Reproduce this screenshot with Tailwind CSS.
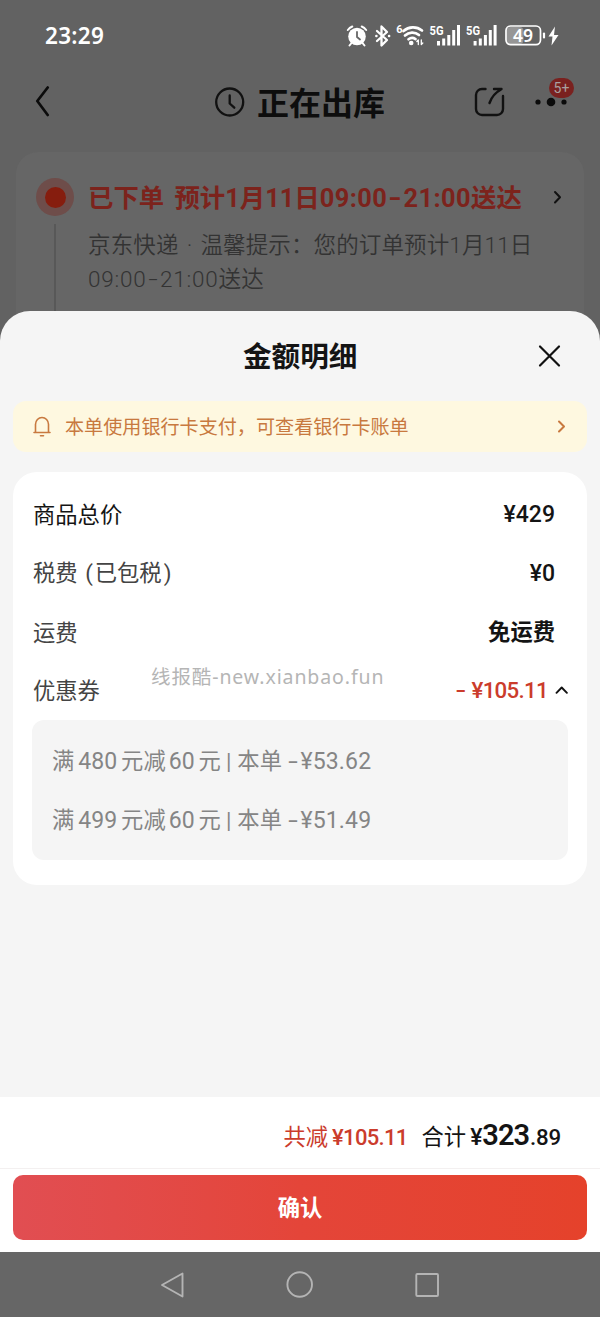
<!DOCTYPE html>
<html lang="zh-CN">
<head>
<meta charset="utf-8">
<meta name="viewport" content="width=device-width, initial-scale=1">
<title>金额明细</title>
<script src="https://cdn.jsdelivr.net/npm/@tailwindcss/browser@4"></script>
</head>
<body class="bg-[#626262]">
<div class="w-[600px] h-[1317px] flex flex-col overflow-hidden font-['Roboto','Noto_Sans_CJK_SC',sans-serif] text-[22.3px] leading-none whitespace-nowrap">

  <!-- Status bar -->
  <div class="h-[72px] shrink-0 flex items-center justify-between pl-[45px] pr-[40px] text-white">
    <span class="font-['Noto_Sans','Noto_Sans_CJK_SC',sans-serif] font-semibold text-[22.5px] tracking-[0.3px]">23:29</span>
    <svg class="w-[215px] h-[26px]" viewBox="345 23 215 26" fill="none" stroke="#fff" stroke-linecap="round" stroke-linejoin="round">
      <circle cx="357" cy="36.500" r="8.800" fill="#fff" stroke="none"/>
      <path d="M347.800 30a12 12 0 0 1 4.500-3.500M361.700 26.500a12 12 0 0 1 4.500 3.500M351.500 43l-2 2.500M362.500 43l2 2.500" stroke-width="2"/>
      <path d="M357 32v5l3 2.500" stroke="#666" stroke-width="1.800"/>
      <path d="M377 31l10 9-5.500 5.500v-19L387 32l-10 9" stroke-width="2.300"/>
      <path d="M376.300 36h.2M389 36h.2" stroke-width="2.400"/>
      <text x="396.300" y="33" font-family="Roboto" font-weight="700" font-size="11" fill="#fff" stroke="none">6</text>
      <path d="M403.500 31a14.500 14.500 0 0 1 18.500-.5M405 35.500a10.500 10.500 0 0 1 14-.5M408.500 39.300a6 6 0 0 1 7-.2" stroke-width="2.700"/>
      <circle cx="411.200" cy="43" r="2.300" fill="#fff" stroke="none"/>
      <path d="M418.300 44.500v-4.500l-1.500 1.500M421.300 40v4.500l1.500-1.500" stroke-width="1.300"/>
      <text x="429.500" y="35" font-family="Roboto" font-weight="700" font-size="13.500" textLength="14" lengthAdjust="spacingAndGlyphs" fill="#fff" stroke="none">5G</text>
      <path d="M437 45.500v-4.500h3v4.500zM442.200 45.500v-7h3v7zM447.300 45.500v-10.500h3v10.500zM452.200 45.500v-15.500h3v15.500zM457 45.500v-20.500h3v20.500z" fill="#fff" stroke="none"/>
      <text x="466" y="35" font-family="Roboto" font-weight="700" font-size="13.500" textLength="14" lengthAdjust="spacingAndGlyphs" fill="#fff" stroke="none">5G</text>
      <path d="M473.600 45.500v-4.500h3v4.500zM478.800 45.500v-7h3v7zM483.900 45.500v-10.500h3v10.500zM488.800 45.500v-15.500h3v15.500zM493.600 45.500v-20.500h3v20.500z" fill="#fff" stroke="none"/>
      <rect x="506.500" y="27" width="17" height="17" rx="4" fill="#969696" stroke="none"/>
      <rect x="506" y="26" width="34.500" height="18.600" rx="4.500" stroke-width="1.700"/>
      <text x="523" y="42" text-anchor="middle" font-family="Noto Sans" font-weight="600" font-size="17.500" fill="#fff" stroke="none">49</text>
      <path d="M544 33.500v4" stroke-width="2.200"/>
      <path d="M555 26.500l-6.500 10h4l-1 9 7-10.500h-4.500z" fill="#fff" stroke="none"/>
    </svg>
  </div>

  <!-- Page header -->
  <div class="h-[60px] shrink-0 flex items-center text-[#0d0d0d]">
    <svg class="w-4 h-8 ml-[34px]" viewBox="34 86 16 32" fill="none" stroke="#0b0b0b" stroke-width="2.700" stroke-linecap="round" stroke-linejoin="round"><path d="M47.700 87.500L37.300 101l10.400 14"/></svg>
    <svg class="w-8 h-8 ml-[164px]" viewBox="0 0 32 32" fill="none" stroke="#111" stroke-width="2.300" stroke-linecap="round" stroke-linejoin="round"><circle cx="15.700" cy="16" r="13.500"/><path d="M15.700 9.500v8l4.600 4.200"/></svg>
    <span class="ml-[11px] w-[129px] pt-[3px] text-[32px] font-bold">正在出库</span>
    <svg class="w-8 h-8 ml-[88px]" viewBox="474 86 32 32" fill="none" stroke="#111" stroke-width="2.400" stroke-linecap="round" stroke-linejoin="round"><path d="M485.500 89h-3.500a6 6 0 0 0-6 6v14a6 6 0 0 0 6 6h15a6 6 0 0 0 6-6V96M494 89h7.500M501 89.500c-5.500 3-9.500 7.500-11.500 13.500"/></svg>
    <div class="relative w-[40px] h-8 ml-[28px]">
      <svg class="w-full h-full" viewBox="534 86 40 32" fill="#0b0b0b"><circle cx="538" cy="102" r="2.600"/><circle cx="551" cy="102" r="4.300"/><circle cx="564" cy="102" r="2.600"/></svg>
      <span class="absolute left-[15px] -top-[8px] w-[25px] h-[20px] rounded-full bg-[#7a211f] text-[#a9a0a0] text-[14px] flex items-center justify-center">5+</span>
    </div>
  </div>

  <!-- Logistics card -->
  <div class="h-[220px] shrink-0 mt-5 mx-4 rounded-t-[22px] bg-[#666] flex">
    <div class="w-[38px] ml-5 flex flex-col items-center pt-[26px]">
      <div class="w-[38px] h-[38px] shrink-0 rounded-full bg-[#6e4d4a] flex items-center justify-center"><div class="w-[21px] h-[21px] rounded-full bg-[#861d0e]"></div></div>
      <div class="w-[1.500px] flex-1 mt-2 bg-[#585858]"></div>
    </div>
    <div class="ml-[14px] flex-1 pt-[26px]">
      <div class="h-[38px] flex items-center text-[25.400px] font-bold text-[#7c231c]"><span class="w-[436px] pt-[3px] [word-spacing:4px]">已下单 预计1月11日<span class="tracking-[0.4px]">09:00<span class="inline-block scale-x-140 mx-[3px]">-</span>21:00</span>送达</span>
        <svg class="w-3 h-4 ml-[27px]" viewBox="0 0 12 16" fill="none" stroke="#111" stroke-width="2" stroke-linecap="round" stroke-linejoin="round"><path d="M4 3l5 5.300L4 13.500"/></svg>
      </div>
      <div class="mt-[12px] h-[34px] flex items-center text-[22.500px] font-[350] text-[#333] [word-spacing:2.500px] tracking-[0.130px]">京东快递 · 温馨提示：您的订单预计1月11日</div>
      <div class="h-[34px] flex items-center text-[22.500px] font-[350] text-[#333] tracking-[0.2px]"><span><span class="tracking-[0.8px]">09:00<span class="inline-block scale-x-150 mx-[3px]">-</span>21:00</span>送达</span></div>
    </div>
  </div>

  <!-- Amount detail sheet -->
  <div class="relative h-[941px] shrink-0 -mt-[61px] rounded-t-[30px] bg-[#f5f5f5] flex flex-col text-[#141414]">
    <div class="h-[90px] flex items-center">
      <span class="ml-[243px] w-[115px] pt-[2px] text-[28.600px] font-bold">金额明细</span>
      <svg class="w-6 h-6 ml-[179px]" viewBox="0 0 24 24" fill="none" stroke="#111" stroke-width="2.200" stroke-linecap="round"><path d="M3 2.500l19 19M22 2.500l-19 19"/></svg>
    </div>

    <div class="h-[51px] mx-[13px] rounded-[13px] bg-[#fef8e0] text-[#c8793f] flex items-center">
      <svg class="w-5 h-6 ml-[19px]" viewBox="0 0 20 24" fill="none" stroke="#c8793f" stroke-width="1.600" stroke-linecap="round" stroke-linejoin="round"><path d="M2 17.500h16M3.500 17.200V9.300a6.500 6.800 0 0 1 13 0v7.900M8.500 20.700h3"/></svg>
      <span class="ml-[13px] w-[344px] pt-[2px] text-[19.100px]">本单使用银行卡支付，可查看银行卡账单</span>
      <svg class="w-3 h-4 ml-[146px]" viewBox="0 0 12 16" fill="none" stroke="#c8793f" stroke-width="2" stroke-linecap="round" stroke-linejoin="round"><path d="M4 2.500l5 5L4 12.500"/></svg>
    </div>

    <div class="relative mt-5 mx-[13px] h-[413px] rounded-[24px] bg-white pt-[13px] px-5">
      <div class="h-[58.750px] flex items-center justify-between pr-[12px]"><span class="pt-[2px]">商品总价</span><span class="font-medium text-[23px]">¥429</span></div>
      <div class="h-[58.750px] flex items-center justify-between pr-[12px]"><span class="pt-[1px] text-[#444]">税费 <span class="mx-[2px]">(</span>已包税<span class="ml-[2px]">)</span></span><span class="font-medium text-[23px]">¥0</span></div>
      <div class="h-[58.750px] flex items-center justify-between pr-[12px]"><span class="pt-[2px] text-[#444]">运费</span><span class="pt-[1px] font-bold">免运费</span></div>
      <div class="h-[58.750px] flex items-center"><span class="pt-[2px] text-[#444]">优惠券</span>
        <span class="ml-auto text-[#cb3c2c] font-medium tracking-[-0.700px]"><span class="inline-block scale-x-140 mr-[3px]">-</span> ¥105.11</span>
        <svg class="w-[14px] h-3 ml-[6px] mr-[-1px]" viewBox="0 0 14 12" fill="none" stroke="#111" stroke-width="1.900" stroke-linecap="round" stroke-linejoin="round"><path d="M2.500 7.800L7.700 2.500l5.200 5.300"/></svg>
      </div>
      <div class="h-[140px] -mr-[1px] -ml-[1px] rounded-[12px] bg-[#f5f5f5] py-[11px] pl-5 text-[#858585] text-[22.300px]">
        <div class="h-[59px] pt-[2px] flex items-center"><span>满</span><span class="ml-[4px] text-[23px]">480</span><span class="ml-[4px]">元减</span><span class="ml-[3px] text-[23px]">60</span><span class="ml-[4px]">元</span><span class="ml-[5px]">|</span><span class="ml-[6px]">本单</span><span class="ml-[8px] text-[23px] tracking-[0.150px]"><span class="inline-block scale-x-150 mr-[4px]">-</span>¥53.62</span></div>
        <div class="h-[59px] pt-[2px] flex items-center"><span>满</span><span class="ml-[4px] text-[23px]">499</span><span class="ml-[4px]">元减</span><span class="ml-[3px] text-[23px]">60</span><span class="ml-[4px]">元</span><span class="ml-[5px]">|</span><span class="ml-[6px]">本单</span><span class="ml-[8px] text-[23px] tracking-[0.150px]"><span class="inline-block scale-x-150 mr-[4px]">-</span>¥51.49</span></div>
      </div>
      <span class="absolute left-[138px] top-[195px] font-['Noto_Sans','Noto_Sans_CJK_SC',sans-serif] text-[19.500px] tracking-[0.900px] text-[#b5b5b5]">线报酷-new.xianbao.fun</span>
    </div>

    <div class="mt-auto h-[155px] bg-white flex flex-col">
      <div class="h-[72px] border-b border-[#f3f0f0] flex items-center justify-end pr-[39px] pt-[5px]">
        <div class="flex items-baseline">
          <span class="text-[#cb3c2c]">共减</span><span class="ml-[4px] text-[#cb3c2c] font-medium text-[22px] tracking-[-0.700px]">¥105.11</span>
          <span class="ml-[14px]">合计</span><span class="ml-[4px] font-medium text-[23px]">¥</span><span class="font-semibold text-[29px] tracking-[-1px]">323</span><span class="ml-[1px] font-medium text-[22.300px] tracking-[-0.200px]">.89</span>
        </div>
      </div>
      <div class="mt-[6px] mx-[13px] h-[65px] rounded-[10px] bg-linear-to-r from-[#e14e52] via-[#e44539] to-[#e5422b] flex items-center justify-center text-white font-bold pt-[2px]">确认</div>
    </div>
  </div>

  <!-- Navigation bar -->
  <div class="h-[65px] shrink-0 bg-[#666]">
    <svg class="w-[600px] h-[65px]" viewBox="0 1252 600 65" fill="none" stroke="#b4b4b4" stroke-width="1.900" stroke-linejoin="round"><path d="M182.500 1273.500v23l-20.500-11.500z"/><circle cx="299.700" cy="1284.500" r="12.300"/><rect x="416.300" y="1274" width="21.700" height="22" rx="1"/></svg>
  </div>
</div>
</body>
</html>
